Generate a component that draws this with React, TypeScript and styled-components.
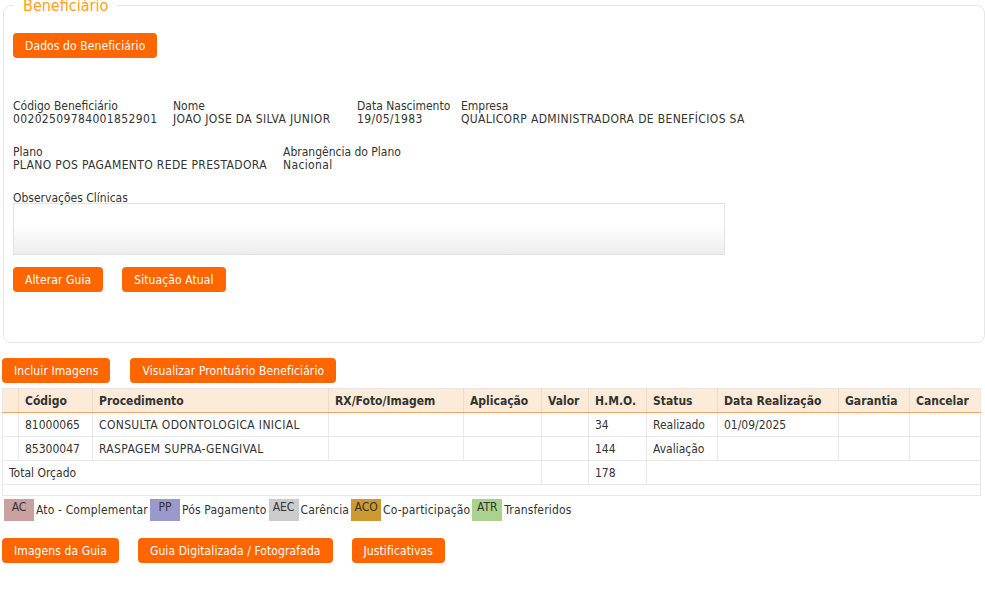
import React from 'react';
import styled, { createGlobalStyle } from 'styled-components';

const GlobalStyle = createGlobalStyle`
  html, body {
    margin: 0;
    padding: 0;
    background: #ffffff;
  }
  body {
    font-family: "DejaVu Sans Condensed", "DejaVu Sans", Verdana, sans-serif;
    font-size: 12px;
    color: #333333;
  }
`;

const fieldsRow1 = [
  { label: 'Código Beneficiário', value: '00202509784001852901', width: 160 },
  { label: 'Nome', value: 'JOAO JOSE DA SILVA JUNIOR', width: 184 },
  { label: 'Data Nascimento', value: '19/05/1983', width: 104 },
  { label: 'Empresa', value: 'QUALICORP ADMINISTRADORA DE BENEFÍCIOS SA', width: 0 },
];

const fieldsRow2 = [
  { label: 'Plano', value: 'PLANO POS PAGAMENTO REDE PRESTADORA', width: 270 },
  { label: 'Abrangência do Plano', value: 'Nacional', width: 0 },
];

const procedures = [
  { codigo: '81000065', proc: 'CONSULTA ODONTOLOGICA INICIAL', hmo: '34', status: 'Realizado', data: '01/09/2025' },
  { codigo: '85300047', proc: 'RASPAGEM SUPRA-GENGIVAL', hmo: '144', status: 'Avaliação', data: '' },
];

const colWidths = [16, 74, 236, 135, 78, 47, 58, 71, 121, 71, 71];

const legendItems = [
  { code: 'AC', label: 'Ato - Complementar', color: '#c9a1a1' },
  { code: 'PP', label: 'Pós Pagamento', color: '#9999cc' },
  { code: 'AEC', label: 'Carência', color: '#cccccc' },
  { code: 'ACO', label: 'Co-participação', color: '#cc9933' },
  { code: 'ATR', label: 'Transferidos', color: '#aad28e' },
];

const App = () => {
  return (
    <Page>
      <GlobalStyle />
      <Fieldset>
        <Legend>Beneficiário</Legend>
        <ButtonRow>
          <Button>Dados do Beneficiário</Button>
        </ButtonRow>

        <InfoRow $top={42}>
          {fieldsRow1.map((f) => (
            <Field key={f.label} $width={f.width}>
              <div>{f.label}</div>
              <Value>{f.value}</Value>
            </Field>
          ))}
        </InfoRow>

        <InfoRow $top={20}>
          {fieldsRow2.map((f) => (
            <Field key={f.label} $width={f.width}>
              <div>{f.label}</div>
              <Value>{f.value}</Value>
            </Field>
          ))}
        </InfoRow>

        <ObsBlock>
          <div>Observações Clínicas</div>
          <ObsBox />
        </ObsBlock>

        <ButtonRow $top={12} $gap={19}>
          <Button>Alterar Guia</Button>
          <Button>Situação Atual</Button>
        </ButtonRow>
      </Fieldset>

      <ButtonRow $top={15} $gap={20}>
        <Button>Incluir Imagens</Button>
        <Button>Visualizar Prontuário Beneficiário</Button>
      </ButtonRow>

      <Table>
        <colgroup>
          {colWidths.map((w, i) => (
            <col key={i} style={{ width: w }} />
          ))}
        </colgroup>
        <thead>
          <tr>
            <th />
            <th>Código</th>
            <th>Procedimento</th>
            <th>RX/Foto/Imagem</th>
            <th>Aplicação</th>
            <th>Valor</th>
            <th>H.M.O.</th>
            <th>Status</th>
            <th>Data Realização</th>
            <th>Garantia</th>
            <th>Cancelar</th>
          </tr>
        </thead>
        <tbody>
          {procedures.map((p) => (
            <tr key={p.codigo}>
              <td />
              <td>{p.codigo}</td>
              <CapsCell>{p.proc}</CapsCell>
              <td />
              <td />
              <td />
              <td>{p.hmo}</td>
              <td>{p.status}</td>
              <td>{p.data}</td>
              <td />
              <td />
            </tr>
          ))}
          <tr>
            <td colSpan={5}>Total Orçado</td>
            <td />
            <td>178</td>
            <td colSpan={4} />
          </tr>
          <EmptyRow>
            <td colSpan={11} />
          </EmptyRow>
        </tbody>
      </Table>

      <LegendBar>
        {legendItems.map((item) => (
          <LegendItem key={item.code}>
            <Swatch $color={item.color}>{item.code}</Swatch>
            <span>{item.label}</span>
          </LegendItem>
        ))}
      </LegendBar>

      <ButtonRow $top={17} $gap={19}>
        <Button>Imagens da Guia</Button>
        <Button>Guia Digitalizada / Fotografada</Button>
        <Button>Justificativas</Button>
      </ButtonRow>
    </Page>
  );
};

export default App;

const Page = styled.div`
  padding: 0 0 0 2px;
  margin-top: -4px;
`;

const Fieldset = styled.fieldset`
  margin: 0 0 0 1px;
  padding: 18px 9px 50px 9px;
  border: 1px solid #e6e6e6;
  border-radius: 8px;
  min-width: 0;
`;

const Legend = styled.legend`
  padding: 0 9px;
  margin-left: 1px;
  font-size: 16px;
  color: #ff9f1a;
  line-height: 19px;
`;

const ButtonRow = styled.div<{ $top?: number; $gap?: number }>`
  display: flex;
  align-items: center;
  gap: ${(p) => p.$gap ?? 20}px;
  margin-top: ${(p) => p.$top ?? 0}px;
`;

const Button = styled.button`
  height: 25px;
  padding: 0 12px;
  border: none;
  border-radius: 4px;
  background: #ff6600;
  color: #ffffff;
  font-family: inherit;
  font-size: 12px;
  letter-spacing: 0.1px;
  cursor: pointer;
`;

const InfoRow = styled.div<{ $top: number }>`
  display: flex;
  margin-top: ${(p) => p.$top}px;
  line-height: 13px;
`;

const Field = styled.div<{ $width: number }>`
  ${(p) => (p.$width ? `width: ${p.$width}px;` : 'flex: 1;')}
  white-space: nowrap;
`;

const Value = styled.div`
  letter-spacing: 0.35px;
`;

const ObsBlock = styled.div`
  margin-top: 20px;
  line-height: 13px;
`;

const ObsBox = styled.div`
  width: 710px;
  height: 50px;
  margin-top: -2px;
  border: 1px solid #e3e3e3;
  background: linear-gradient(#ffffff 40%, #eeeeee);
`;

const Table = styled.table`
  margin-top: 5px;
  width: 978px;
  table-layout: fixed;
  border-collapse: collapse;
  border: 1px solid #e8e8e8;

  th {
    height: 23px;
    padding: 0 6px;
    background: #fcebd8;
    border-bottom: 1px solid #f4a46a;
    border-left: 1px solid #eadccb;
    text-align: left;
    font-weight: bold;
    white-space: nowrap;
    overflow: hidden;
  }

  th:first-child {
    border-left: none;
  }

  td {
    height: 23px;
    padding: 0 6px;
    border: 1px solid #e8e8e8;
    white-space: nowrap;
    overflow: hidden;
  }
`;

const CapsCell = styled.td`
  letter-spacing: 0.35px;
`;

const EmptyRow = styled.tr`
  td {
    height: 10px;
  }
`;

const LegendBar = styled.div`
  display: flex;
  align-items: center;
  margin-top: 3px;
  padding-left: 2px;
  letter-spacing: 0.15px;
`;

const LegendItem = styled.div`
  display: flex;
  align-items: center;
  gap: 2px;
  margin-right: 2px;
`;

const Swatch = styled.span<{ $color: string }>`
  display: inline-flex;
  justify-content: center;
  align-items: flex-start;
  min-width: 30px;
  height: 22px;
  padding: 0 3px;
  box-sizing: border-box;
  background: ${(p) => p.$color};
  line-height: 17px;
  letter-spacing: 0;
`;
